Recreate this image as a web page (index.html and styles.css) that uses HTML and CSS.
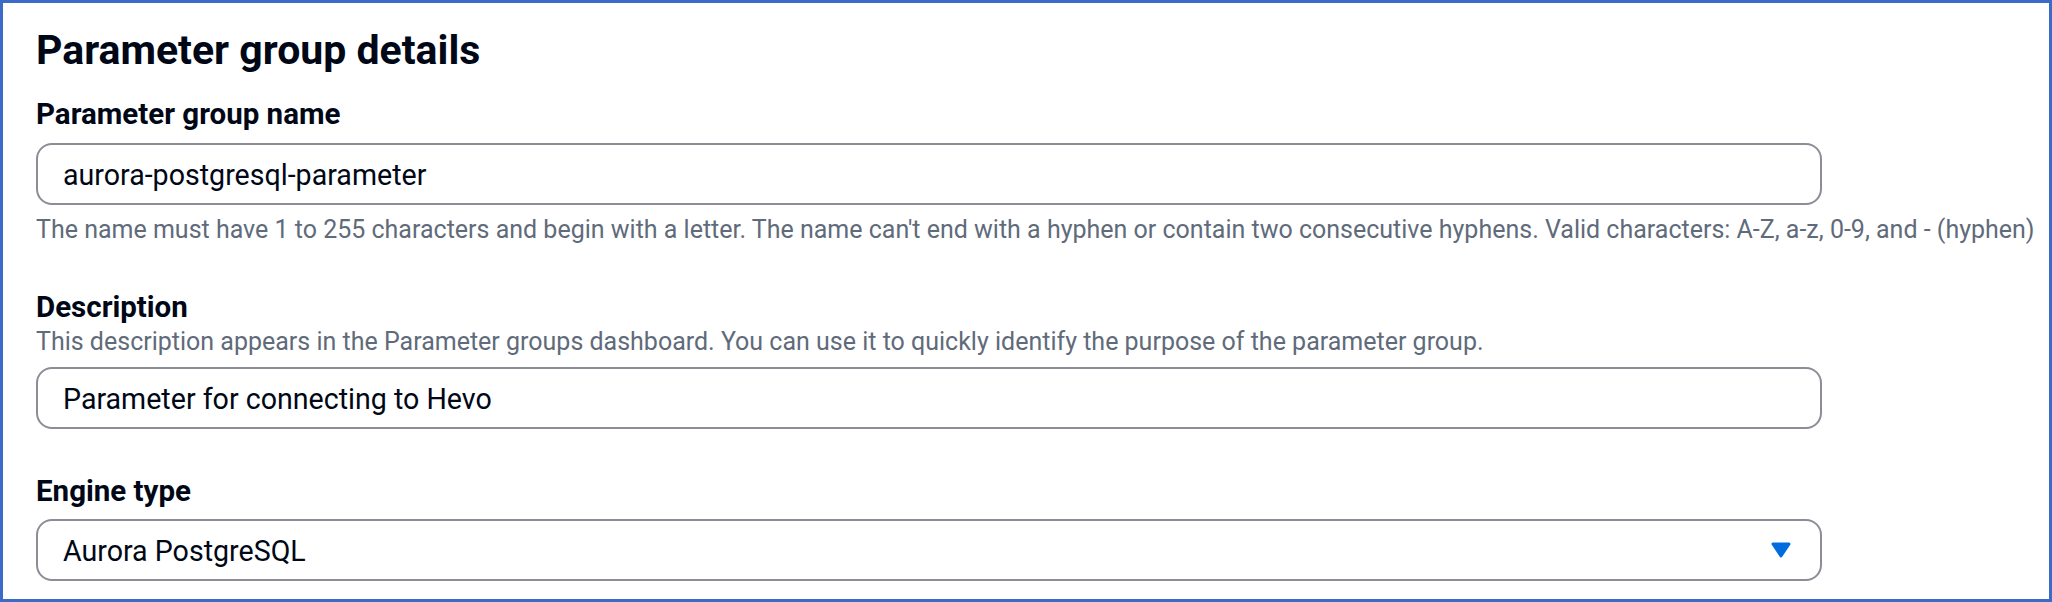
FILE: index.html
```html
<!DOCTYPE html>
<html lang="en">
<head>
<meta charset="utf-8">
<title>Parameter group details</title>
<link rel="stylesheet" href="styles.css">
</head>
<body>
<div class="frame">
  <h2 class="title">Parameter group details</h2>

  <div class="field field-first">
    <label class="label">Parameter group name</label>
    <div class="input">aurora-postgresql-parameter</div>
    <p class="hint hint-after">The name must have 1 to 255 characters and begin with a letter. The name can't end with a hyphen or contain two consecutive hyphens. Valid characters: A-Z, a-z, 0-9, and - (hyphen)</p>
  </div>

  <div class="field field-desc">
    <label class="label">Description</label>
    <p class="hint hint-before">This description appears in the Parameter groups dashboard. You can use it to quickly identify the purpose of the parameter group.</p>
    <div class="input input-desc">Parameter for connecting to Hevo</div>
  </div>

  <div class="field field-engine">
    <label class="label">Engine type</label>
    <div class="input select">
      <span>Aurora PostgreSQL</span>
      <svg class="caret" width="20" height="16" viewBox="0 0 20 16" aria-hidden="true">
        <path d="M2 2 H18 L10 14 Z" fill="#006ce0" stroke="#006ce0" stroke-width="3" stroke-linejoin="round"/>
      </svg>
    </div>
  </div>
</div>
</body>
</html>
```
FILE: styles.css
```css
html, body {
  margin: 0;
  padding: 0;
  background: #ffffff;
}

body {
  font-family: Roboto, "Liberation Sans", Arial, sans-serif;
  color: #000716;
}

.frame {
  box-sizing: border-box;
  width: 2052px;
  height: 602px;
  border: 3px solid #3c6bc7;
  padding: 25px 0 0 33px;
  overflow: hidden;
  background: #ffffff;
}

.title {
  margin: 0;
  font-size: 41px;
  line-height: 44px;
  font-weight: 700;
}

.field {
  display: flex;
  flex-direction: column;
  align-items: flex-start;
}

.field-first {
  margin-top: 25px;
}

.field-desc {
  margin-top: 44px;
}

.field-engine {
  margin-top: 45px;
}

.label {
  display: block;
  font-size: 29.5px;
  line-height: 34px;
  font-weight: 700;
  margin-bottom: 12px;
}

.field-desc .label {
  margin-bottom: 2px;
}

.field-engine .label {
  margin-bottom: 11px;
}

.input {
  box-sizing: border-box;
  width: 1786px;
  height: 62px;
  border: 2px solid #8c8d96;
  border-radius: 16px;
  padding: 13px 24px 11px 25px;
  font-size: 28.6px;
  line-height: 34px;
  color: #000716;
  white-space: nowrap;
}

.input-desc {
  margin-top: 9px;
}

.select {
  display: flex;
  align-items: center;
  justify-content: space-between;
  padding-right: 29px;
}

.caret {
  display: block;
  margin-top: -2px;
}

.hint {
  margin: 0;
  font-size: 25px;
  line-height: 32px;
  color: #5f6b7a;
  white-space: nowrap;
}

.hint-after {
  margin-top: 9px;
}
```
